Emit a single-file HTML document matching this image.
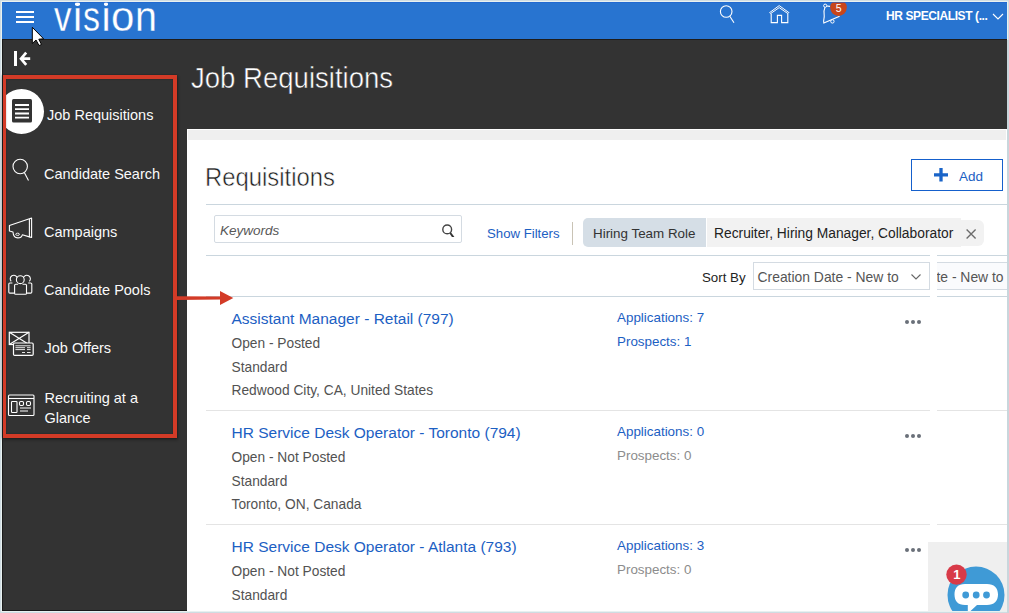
<!DOCTYPE html>
<html><head><meta charset="utf-8">
<style>
html,body{margin:0;padding:0;}
body{width:1009px;height:613px;position:relative;overflow:hidden;background:#cfdce2;font-family:"Liberation Sans",sans-serif;}
.a{position:absolute;}
.t{position:absolute;line-height:1;white-space:nowrap;}
#frame{left:2px;top:2px;width:1005px;height:609px;background:#333333;overflow:hidden;}
#hdr{left:2px;top:2px;width:1005px;height:37px;background:#2874d0;}
.hb{left:16px;width:18px;height:2px;background:#fff;}
.side{color:#fafafa;font-size:14.5px;}
#panel{left:187px;top:129px;width:820px;height:482px;background:#fff;}
.line{height:1px;background:#cad6de;}
.rl{height:1px;background:#e4e4e4;}
.link{color:#1c60c3;}
.det{color:#525252;font-size:13.75px;}
.vg{top:-4.4px;font-size:42px;color:#fff;transform-origin:0 0;-webkit-text-stroke:0.3px #2874d0;}
.dots{width:4px;height:4px;border-radius:50%;background:#6a7079;}
</style></head><body>
<div class="a" style="left:1px;top:1px;width:1007px;height:611px;background:#e8f1f0"></div>
<div class="a" id="frame"></div>
<div class="a" id="hdr"></div>
<div class="a" style="left:2px;top:39px;width:1005px;height:1px;background:#1f1c1a"></div>
<!-- hamburger -->
<div class="a hb" style="top:11px"></div>
<div class="a hb" style="top:16px"></div>
<div class="a hb" style="top:21px"></div>
<!-- vision -->
<div class="t vg" style="left:53.60px;transform:scaleX(0.833)">v</div>
<div class="t vg" style="left:71.65px;transform:scaleX(1.000)">&#x131;</div>
<div class="t vg" style="left:83.39px;transform:scaleX(0.810)">s</div>
<div class="t vg" style="left:100.25px;transform:scaleX(1.000)">&#x131;</div>
<div class="t vg" style="left:111.00px;transform:scaleX(1.000)">o</div>
<div class="t vg" style="left:134.68px;transform:scaleX(0.939)">n</div>
<div class="a" style="left:75.4px;top:2.2px;width:4.2px;height:3.6px;border-radius:50%;background:#fff"></div>
<div class="a" style="left:104.1px;top:2.2px;width:4.2px;height:3.6px;border-radius:50%;background:#fff"></div>
<!-- header icons -->
<svg class="a" style="left:700px;top:2px" width="200" height="37" viewBox="700 2 200 37">
  <circle cx="726.2" cy="11.5" r="5.8" fill="none" stroke="#fff" stroke-width="1.1"/>
  <line x1="729.8" y1="16.2" x2="734" y2="22.8" stroke="#fff" stroke-width="1.1"/>
  <path d="M769.6 12.6 L779.2 5.6 L788.9 12.6 L787.9 13.6 L779.2 7.6 L770.6 13.6 Z" fill="none" stroke="#fff" stroke-width="1"/>
  <path d="M771.2 13.8 V22.6 H777.4 V15.4 H781.6 V22.6 H787.8 V13.8" fill="none" stroke="#fff" stroke-width="1.1"/>
  <path d="M825 7.2 C823.6 10 823.8 13 824.2 15.5 C824.6 18 823 20.5 823.8 23 L839.6 16.2" fill="none" stroke="#fff" stroke-width="1.1"/>
  <path d="M826.5 6 L830 6.4" fill="none" stroke="#fff" stroke-width="1.1"/>
  <circle cx="825.2" cy="5.7" r="1.6" fill="#2874d0" stroke="#fff" stroke-width="1"/>
  <circle cx="832.4" cy="21.4" r="1.7" fill="#2874d0" stroke="#fff" stroke-width="1"/>
  <circle cx="838.5" cy="7.6" r="8.3" fill="#c8461a"/>
  <text x="838.6" y="11.6" fill="#fff" font-size="10.5" font-family="Liberation Sans" text-anchor="middle">5</text>
</svg>
<div class="t" style="left:886px;top:9.8px;font-size:12px;font-weight:bold;color:#fff;letter-spacing:-0.4px">HR SPECIALIST (...</div>
<svg class="a" style="left:990px;top:10px" width="17" height="14" viewBox="990 10 17 14">
  <path d="M993 14 L998 19 L1003 14" fill="none" stroke="#fff" stroke-width="1.1"/>
</svg>

<!-- collapse icon -->
<svg class="a" style="left:10px;top:46px" width="26" height="24" viewBox="10 46 26 24">
  <rect x="14" y="51" width="3" height="15" fill="#fff"/>
  <path d="M30.2 58.7 H22 M26.2 52.6 L21 58.7 L26.2 64.8" fill="none" stroke="#fff" stroke-width="2.7"/>
</svg>

<!-- page title -->
<div class="t" style="left:190.5px;top:64.2px;font-size:29px;color:#fff;transform-origin:0 0;transform:scaleX(0.95);-webkit-text-stroke:0.5px #333">Job Requisitions</div>

<!-- sidebar -->
<div class="a" style="left:2px;top:80px;width:50px;height:60px;overflow:hidden"><div class="a" style="left:-3px;top:8.5px;width:45px;height:45px;border-radius:50%;background:#fff"></div></div>
<svg class="a" style="left:10px;top:97px" width="26" height="28" viewBox="10 97 26 28">
  <rect x="12" y="99" width="20" height="23.5" rx="1.5" fill="#333"/>
  <path d="M15 105 H29 M15 109.2 H29 M15 113.5 H29 M15 117.7 H29" stroke="#fff" stroke-width="1.8"/>
</svg>
<div class="t side" style="left:47px;top:108.2px">Job Requisitions</div>

<svg class="a" style="left:8px;top:156px" width="26" height="28" viewBox="8 156 26 28">
  <circle cx="20.2" cy="166.5" r="7.2" fill="none" stroke="#fff" stroke-width="1.1"/>
  <line x1="24.3" y1="172.5" x2="28.5" y2="180.5" stroke="#fff" stroke-width="1.1"/>
</svg>
<div class="t side" style="left:44px;top:166.7px">Candidate Search</div>

<svg class="a" style="left:6px;top:214px" width="30" height="28" viewBox="6 214 30 28">
  <path d="M9.4 225.4 L29.4 218.7 V236.9 L22.3 234.8 C21.8 236.8 20.3 237.9 17.8 237.9 C14.8 237.9 13.2 235.6 13 232 L9.4 231 Z" fill="none" stroke="#fff" stroke-width="1.1" stroke-linejoin="round"/>
  <path d="M29.4 218.7 L31.6 218.1 V237.5 L29.4 236.9" fill="none" stroke="#fff" stroke-width="1.1" stroke-linejoin="round"/>
  <ellipse cx="17.6" cy="234.3" rx="1.9" ry="1.1" fill="none" stroke="#fff" stroke-width="0.9"/>
</svg>
<div class="t side" style="left:44px;top:224.7px">Campaigns</div>

<svg class="a" style="left:6px;top:272px" width="30" height="26" viewBox="6 272 30 26">
  <g fill="none" stroke="#fff" stroke-width="1.1">
  <path d="M11.2 281.3 A3.6 3.6 0 1 1 17.2 277.6"/>
  <path d="M29.4 281.3 A3.6 3.6 0 1 0 23.4 277.6"/>
  <path d="M12.4 283 H9.9 Q8.8 283 8.8 284.1 V292 Q8.8 293.1 9.9 293.1 H14.6"/>
  <path d="M28.2 283 H30.7 Q31.8 283 31.8 284.1 V292 Q31.8 293.1 30.7 293.1 H26.5"/>
  <circle cx="20.3" cy="279.7" r="3.9"/>
  <path d="M18.1 284.2 H15.7 Q14.6 284.2 14.6 285.3 V293.2 Q14.6 294.3 15.7 294.3 H25.4 Q26.5 294.3 26.5 293.2 V285.3 Q26.5 284.2 25.4 284.2 H22.5"/>
  </g>
</svg>
<div class="t side" style="left:44px;top:282.5px">Candidate Pools</div>

<svg class="a" style="left:6px;top:329px" width="30" height="30" viewBox="6 329 30 30">
  <g fill="none" stroke="#fff" stroke-width="1.2">
  <rect x="9.3" y="332.3" width="19.7" height="12.2"/>
  <path d="M9.3 332.3 L29 344.5 M29 332.3 L9.3 344.5"/>
  <rect x="13.5" y="343" width="19.7" height="12.4" rx="1.2" fill="#333"/>
  </g>
  <path d="M15.4 345.8 H30.6 M15.4 347.7 H25 M27 347.7 H30.6 M15.4 349.6 H25 M27 349.6 H30.6 M22 352.5 H25 M27 352.5 H30.6" stroke="#e8e8e8" stroke-width="1"/>
</svg>
<div class="t side" style="left:44.5px;top:340.7px">Job Offers</div>

<svg class="a" style="left:6px;top:392px" width="30" height="26" viewBox="6 392 30 26">
  <rect x="8.5" y="395" width="25.5" height="20.5" rx="1" fill="none" stroke="#fff" stroke-width="1.1"/>
  <line x1="8.5" y1="398.5" x2="34" y2="398.5" stroke="#fff" stroke-width="1.1"/>
  <rect x="11.5" y="401.5" width="5.5" height="11" rx="0.8" fill="none" stroke="#fff" stroke-width="1.1"/>
  <rect x="19.5" y="401.5" width="4" height="4" rx="1.2" fill="none" stroke="#fff" stroke-width="1.1"/>
  <rect x="26.5" y="401.5" width="4" height="4" rx="1.2" fill="none" stroke="#fff" stroke-width="1.1"/>
  <path d="M20 408 H31 M20 411 H28" stroke="#fff" stroke-width="1.1"/>
</svg>
<div class="t side" style="left:44.5px;top:387.6px;line-height:20px">Recruiting at a<br>Glance</div>

<!-- red annotation box -->
<div class="a" style="left:2px;top:75px;width:167px;height:355px;border:4px solid #d33b27;box-shadow:0 0 1.5px rgba(0,0,0,.45), 1px 2px 3px rgba(0,0,0,.3), inset 0 0 1.5px rgba(0,0,0,.45)"></div>

<!-- panel -->
<div class="a" id="panel"></div>
<div class="a" style="left:188px;top:130px;width:818px;height:10px;background:#efefef"></div>
<div class="t" style="left:205px;top:165.4px;font-size:25.5px;color:#1e1e1e;transform-origin:0 0;transform:scaleX(0.935);-webkit-text-stroke:0.5px #fff">Requisitions</div>
<div class="a" style="left:911px;top:159px;width:90px;height:30px;border:1px solid #1560cc"></div>
<svg class="a" style="left:930px;top:165px" width="22" height="20" viewBox="930 165 22 20">
  <path d="M941 168 V181.5 M934 174.8 H948" stroke="#1a64c8" stroke-width="3.3"/>
</svg>
<div class="t link" style="left:959px;top:169.8px;font-size:13.5px">Add</div>
<div class="a line" style="left:206px;top:204px;width:801px"></div>

<div class="a" style="left:214px;top:215px;width:246px;height:26px;border:1px solid #d4dbe2;border-radius:2px"></div>
<div class="t" style="left:220px;top:224px;font-size:13.5px;font-style:italic;color:#585858">Keywords</div>
<svg class="a" style="left:440px;top:221px" width="16" height="16" viewBox="440 221 16 16">
  <circle cx="447.2" cy="229.4" r="4.4" fill="none" stroke="#444" stroke-width="1.4"/>
  <line x1="450.3" y1="233" x2="453.6" y2="237.6" stroke="#333" stroke-width="2"/>
</svg>
<div class="t link" style="left:487px;top:227.2px;font-size:13.2px">Show Filters</div>
<div class="a" style="left:572px;top:222px;width:1px;height:23px;background:#c9c3b5"></div>
<div class="a" style="left:583px;top:218px;width:122.5px;height:29px;background:#d5dee6;border-radius:5px 0 0 5px"></div>
<div class="t" style="left:593px;top:227.1px;font-size:13.4px;color:#333">Hiring Team Role</div>
<div class="a" style="left:706.5px;top:218px;width:254px;height:29px;background:#f2f2f2"></div>
<div class="a" style="left:955px;top:220px;width:29px;height:26px;background:#f2f2f2;border-radius:0 6px 6px 0"></div>
<div class="t" style="left:714px;top:226.5px;font-size:13.8px;color:#222">Recruiter, Hiring Manager, Collaborator</div>
<svg class="a" style="left:962px;top:225px" width="18" height="18" viewBox="962 225 18 18">
  <path d="M966.6 229.6 L975.6 238.4 M975.6 229.6 L966.6 238.4" stroke="#6c6c6c" stroke-width="1.4"/>
</svg>
<div class="a line" style="left:206px;top:255px;width:724px"></div>
<div class="a line" style="left:937px;top:255px;width:70px"></div>

<div class="t" style="left:702px;top:271.3px;font-size:13.3px;color:#222">Sort By</div>
<div class="a" style="left:753px;top:262px;width:175px;height:25.5px;border:1px solid #d4dbe2"></div>
<div class="t" style="left:757.5px;top:270.8px;font-size:13.9px;color:#555">Creation Date - New to</div>
<svg class="a" style="left:908px;top:270px" width="16" height="12" viewBox="908 270 16 12">
  <path d="M911.5 274.5 L916 279 L920.5 274.5" fill="none" stroke="#666" stroke-width="1.1"/>
</svg>
<div class="a" style="left:937px;top:262px;width:70px;height:25.5px;border-top:1px solid #d4dbe2;border-bottom:1px solid #d4dbe2;overflow:hidden;background:#fafbfd">
  <div class="t" style="left:-74.7px;top:7.8px;font-size:13.9px;color:#555">Creation Date - New to</div>
</div>
<div class="a line" style="left:206px;top:296px;width:724px"></div>
<div class="a line" style="left:937px;top:296px;width:70px"></div>

<!-- rows -->
<div class="t link" style="left:231.5px;top:311.3px;font-size:15.5px">Assistant Manager - Retail (797)</div>
<div class="t det" style="left:231.5px;top:337px">Open - Posted</div>
<div class="t det" style="left:231.5px;top:360.5px">Standard</div>
<div class="t det" style="left:231.5px;top:384.1px">Redwood City, CA, United States</div>
<div class="t link" style="left:617px;top:311.2px;font-size:13.4px">Applications: 7</div>
<div class="t link" style="left:617px;top:335.2px;font-size:13.4px">Prospects: 1</div>
<div class="a dots" style="left:904.5px;top:320px"></div>
<div class="a dots" style="left:910.5px;top:320px"></div>
<div class="a dots" style="left:916.5px;top:320px"></div>
<div class="a rl" style="left:206px;top:410px;width:724px"></div>
<div class="a rl" style="left:937px;top:410px;width:70px"></div>

<div class="t link" style="left:231.5px;top:425.3px;font-size:15.5px">HR Service Desk Operator - Toronto (794)</div>
<div class="t det" style="left:231.5px;top:451px">Open - Not Posted</div>
<div class="t det" style="left:231.5px;top:474.5px">Standard</div>
<div class="t det" style="left:231.5px;top:498.1px">Toronto, ON, Canada</div>
<div class="t link" style="left:617px;top:425.2px;font-size:13.4px">Applications: 0</div>
<div class="t" style="left:617px;top:449.2px;font-size:13.4px;color:#8c8c8c">Prospects: 0</div>
<div class="a dots" style="left:904.5px;top:434px"></div>
<div class="a dots" style="left:910.5px;top:434px"></div>
<div class="a dots" style="left:916.5px;top:434px"></div>
<div class="a rl" style="left:206px;top:524px;width:724px"></div>
<div class="a rl" style="left:937px;top:524px;width:70px"></div>

<div class="t link" style="left:231.5px;top:539.3px;font-size:15.5px">HR Service Desk Operator - Atlanta (793)</div>
<div class="t det" style="left:231.5px;top:565px">Open - Not Posted</div>
<div class="t det" style="left:231.5px;top:588.5px">Standard</div>
<div class="t link" style="left:617px;top:539.2px;font-size:13.4px">Applications: 3</div>
<div class="t" style="left:617px;top:563.2px;font-size:13.4px;color:#8c8c8c">Prospects: 0</div>
<div class="a dots" style="left:904.5px;top:548px"></div>
<div class="a dots" style="left:910.5px;top:548px"></div>
<div class="a dots" style="left:916.5px;top:548px"></div>

<!-- chat widget -->
<div class="a" style="left:928px;top:542px;width:79px;height:69px;background:#efefef"></div>
<svg class="a" style="left:928px;top:542px" width="79" height="69" viewBox="928 542 79 69">
  <circle cx="976" cy="595" r="28.5" fill="#3f9ad6"/>
  <path d="M965 584 H987 C994 584 998 588 998 594.5 C998 601 994 605 987 605 H977 L970 611.5 L967.8 611.5 V605 H965 C958 605 954.5 601 954.5 594.5 C954.5 588 958 584 965 584 Z" fill="#fff"/>
  <circle cx="965.7" cy="595" r="3.4" fill="#3f9ad6"/>
  <circle cx="976.2" cy="595" r="3.4" fill="#3f9ad6"/>
  <circle cx="986.5" cy="595" r="3.4" fill="#3f9ad6"/>
  <circle cx="956.5" cy="574.6" r="10.2" fill="#d83a48"/>
  <text x="956.8" y="579.3" fill="#fff" font-size="13" font-weight="bold" font-family="Liberation Sans" text-anchor="middle">1</text>
</svg>

<!-- red arrow -->
<svg class="a" style="left:170px;top:285px" width="70" height="25" viewBox="170 285 70 25">
  <path d="M176 296.2 L220 296.4 L220 291 L233.3 298 L220 305 L220 299.6 L176 299.9 Z" fill="#d33b27"/>
</svg>

<!-- cursor -->
<svg class="a" style="left:28px;top:24px" width="20" height="25" viewBox="28 24 20 25">
  <path d="M32.3 27.3 V43.5 L36 40 L39 45.5 L41.5 44.5 L38.8 39.2 L43.6 38.8 Z" fill="#fff" stroke="#000" stroke-width="1"/>
</svg>

<!-- bottom inner dark line / borders -->
<div class="a" style="left:1007px;top:40px;width:2px;height:573px;background:#c9d6dc"></div>
<div class="a" style="left:2px;top:2px;width:1005px;height:1px;background:#1c62d2;opacity:0.6"></div>
<div class="a" style="left:2px;top:39px;width:1px;height:572px;background:#1a1a1a"></div>
<div class="a" style="left:2px;top:610px;width:185px;height:1px;background:#1a1a1a"></div>
</body></html>
